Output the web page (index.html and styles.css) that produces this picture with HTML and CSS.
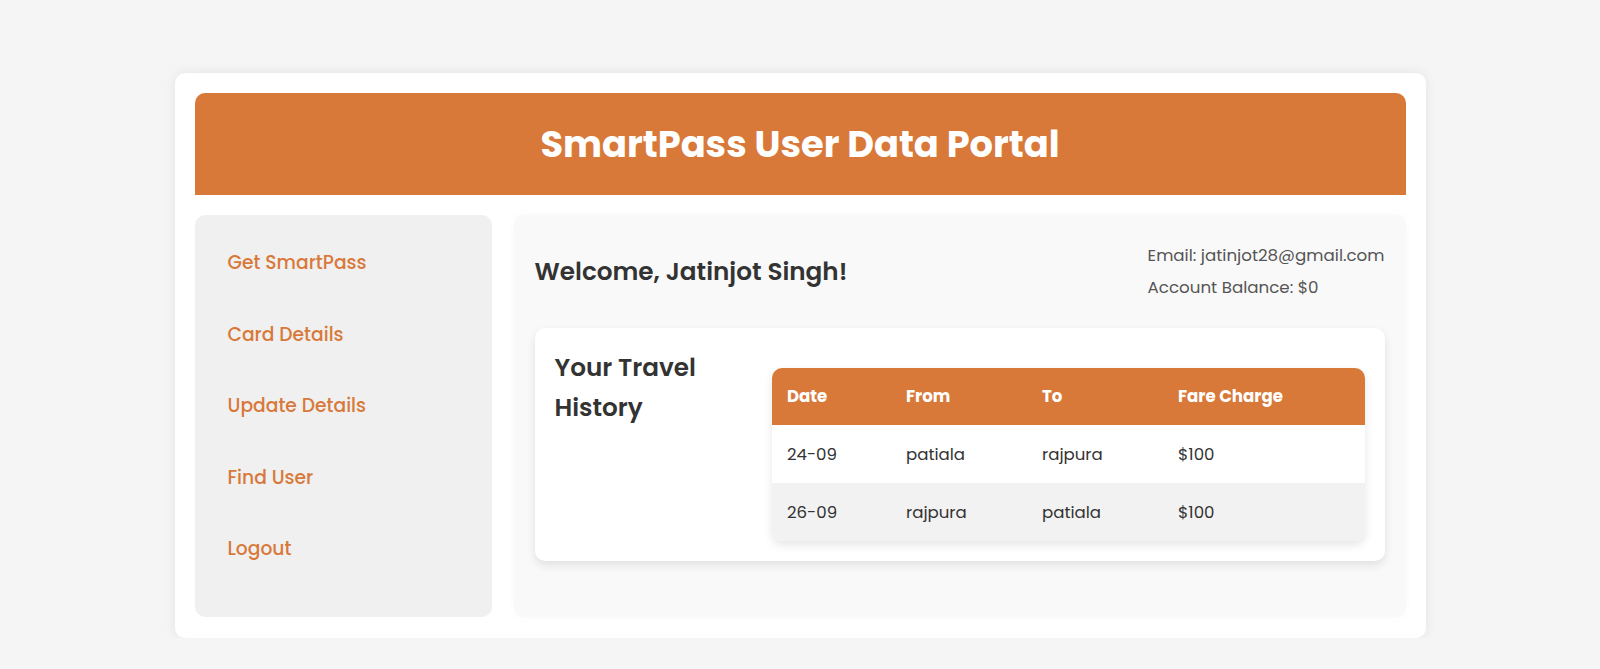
FILE: index.html
```html
<!DOCTYPE html>
<html lang="en">
<head>
<meta charset="UTF-8">
<title>SmartPass User Data Portal</title>
<link rel="stylesheet" href="styles.css">
</head>
<body>
  <div class="portal">
    <header class="portal-header">
      <h1>SmartPass User Data Portal</h1>
    </header>
    <div class="portal-body">
      <nav class="sidebar">
        <ul>
          <li><a href="#">Get SmartPass</a></li>
          <li><a href="#">Card Details</a></li>
          <li><a href="#">Update Details</a></li>
          <li><a href="#">Find User</a></li>
          <li><a href="#">Logout</a></li>
        </ul>
      </nav>
      <main class="main">
        <div class="user-row">
          <h2 class="welcome">Welcome, Jatinjot Singh!</h2>
          <div class="user-info">
            <p>Email: jatinjot28@gmail.com</p>
            <p>Account Balance: $0</p>
          </div>
        </div>
        <section class="travel-card">
          <h3 class="travel-title">Your Travel History</h3>
          <div class="table-wrap">
            <table class="history">
              <thead>
                <tr>
                  <th class="c-date">Date</th>
                  <th class="c-from">From</th>
                  <th class="c-to">To</th>
                  <th>Fare Charge</th>
                </tr>
              </thead>
              <tbody>
                <tr>
                  <td>24-09</td>
                  <td>patiala</td>
                  <td>rajpura</td>
                  <td>$100</td>
                </tr>
                <tr class="alt">
                  <td>26-09</td>
                  <td>rajpura</td>
                  <td>patiala</td>
                  <td>$100</td>
                </tr>
              </tbody>
            </table>
          </div>
        </section>
      </main>
    </div>
  </div>
</body>
</html>
```

FILE: styles.css
```css
* { box-sizing: border-box; }

body {
  margin: 0;
  background: #f4f5f4;
  font-family: "Poppins", "Open Sans", "Noto Sans", sans-serif;
  color: #333;
}

.portal {
  width: 1251px;
  margin: 73px auto 0;
  background: #fff;
  border-radius: 10px;
  padding: 20px 20px 21px;
  box-shadow: 0 0 12px rgba(0, 0, 0, 0.08);
}

.portal-header {
  background: #d8793a;
  border-radius: 10px 10px 0 0;
  height: 102px;
  display: flex;
  align-items: center;
  justify-content: center;
  margin-bottom: 20px;
}

.portal-header h1 {
  margin: 0;
  color: #fff;
  font-size: 36.8px;
  font-weight: 700;
}

.portal-body {
  display: flex;
  gap: 22px;
}

.sidebar {
  flex: none;
  width: 297px;
  background: #f0f0f0;
  border-radius: 10px;
  padding: 19px 20px 25px;
}

.sidebar ul {
  list-style: none;
  margin: 0;
  padding: 0;
}

.sidebar li {
  margin-bottom: 14.5px;
}

.sidebar a {
  display: block;
  padding: 15px 13px;
  line-height: 27px;
  font-size: 18.7px;
  font-weight: 500;
  color: #d8793a;
  text-decoration: none;
}

.main {
  flex: 1;
  min-width: 0;
  background: #f9f9f9;
  border-radius: 10px;
  padding: 20px 21px;
  box-shadow: 0 0 10px rgba(0, 0, 0, 0.03);
}

.user-row {
  display: flex;
  justify-content: space-between;
  align-items: center;
  margin-bottom: 21px;
}

.welcome {
  margin: 0;
  font-size: 24.7px;
  font-weight: 600;
  color: #333;
}

.user-info p {
  margin: 8px 0;
  font-size: 16.7px;
  line-height: 24px;
  color: #555;
}

.travel-card {
  display: flex;
  gap: 20px;
  background: #fff;
  border-radius: 10px;
  padding: 20px;
  box-shadow: 0 4px 10px rgba(0, 0, 0, 0.1);
}

.travel-title {
  flex: 1;
  margin: 0;
  font-size: 24.7px;
  font-weight: 600;
  line-height: 40px;
  color: #333;
}

.table-wrap {
  flex: 3;
  margin-top: 20px;
}

.history {
  width: 100%;
  border-collapse: collapse;
  table-layout: fixed;
  border-radius: 10px;
  overflow: hidden;
  box-shadow: 0 4px 10px rgba(0, 0, 0, 0.1);
  font-size: 16.6px;
}

.history th,
.history td {
  text-align: left;
  padding: 16px 15px;
  line-height: 25px;
}

.history th {
  background: #d8793a;
  color: #fff;
  font-weight: 700;
}

.history td {
  padding-top: 17px;
  padding-bottom: 16px;
  background: #fff;
}

.history .alt td {
  background: #f2f2f2;
}

.c-date { width: 119px; }
.c-from { width: 136px; }
.c-to { width: 136px; }
```
